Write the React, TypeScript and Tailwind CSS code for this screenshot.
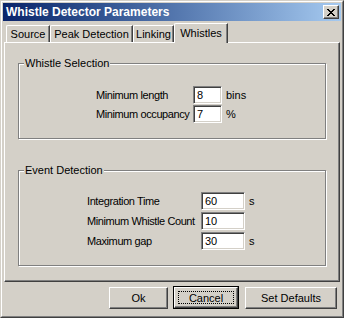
import React from "react";

const font = { fontFamily: '"Liberation Sans", Arial, sans-serif' };

function Field({ value, w }: { value: string; w: string }) {
  return (
    <div
      className={`${w} shrink-0 h-[18px] bg-white border border-t-[#808080] border-l-[#808080] border-b-white border-r-white shadow-[inset_1px_1px_0_#404040,inset_-1px_-1px_0_#d4d0c8] pl-[3px] text-[11px] leading-[16px] text-black`}
    >
      {value}
    </div>
  );
}

function Group({ title, children, className }: { title: string; children: React.ReactNode; className: string }) {
  return (
    <div className={`relative border border-[#808080] shadow-[inset_1px_1px_0_#fff,1px_1px_0_#fff] ${className}`}>
      <span className="absolute -top-[8px] left-[5px] px-[1px] bg-[#d4d0c8] text-[11px] leading-[14px] text-black whitespace-nowrap">
        {title}
      </span>
      {children}
    </div>
  );
}

function Tab({ label, w, active }: { label: string; w: string; active?: boolean }) {
  if (active) {
    return (
      <div
        className={`relative z-10 ${w} h-[20px] -mb-[1px] bg-[#d4d0c8] border-t border-l border-t-white border-l-white rounded-tl-[2px] border-r border-r-[#404040] shadow-[inset_-1px_0_0_#808080] text-center text-[11px] leading-[16px] pt-[1px] whitespace-nowrap`}
      >
        {label}
      </div>
    );
  }
  return (
    <div
      className={`${w} h-[17px] bg-[#d4d0c8] border-t border-l border-t-white border-l-white rounded-tl-[2px] border-r border-r-[#404040] shadow-[inset_-1px_0_0_#808080] text-center text-[11px] leading-[16px] whitespace-nowrap`}
    >
      {label}
    </div>
  );
}

function Button({ label, w, isDefault }: { label: string; w: string; isDefault?: boolean }) {
  if (isDefault) {
    return (
      <div className={`${w} h-[23px] border border-black -mt-[1px]`}>
        <div className="h-full border border-t-white border-l-white border-r-[#404040] border-b-[#404040] shadow-[inset_-1px_-1px_0_#808080] p-[3px]">
          <div className="h-full border border-dotted border-black text-center text-[11px] leading-[13px]">{label}</div>
        </div>
      </div>
    );
  }
  return (
    <div
      className={`${w} h-[22px] border border-t-white border-l-white border-r-[#404040] border-b-[#404040] shadow-[inset_-1px_-1px_0_#808080] text-center text-[11px] leading-[20px]`}
    >
      {label}
    </div>
  );
}

function Row({ label, value, unit, lw, fw }: { label: string; value: string; unit?: string; lw: string; fw: string }) {
  return (
    <div className="flex items-center whitespace-nowrap">
      <span className={`${lw} shrink-0 tracking-[-0.4px]`}>{label}</span>
      <Field value={value} w={fw} />
      {unit && <span className="ml-[4px]">{unit}</span>}
    </div>
  );
}

export default function App() {
  return (
    <div style={font} className="w-[344px] h-[318px] bg-[#d4d0c8] text-black">
      <div className="h-full border border-t-[#d4d0c8] border-l-[#d4d0c8] border-r-[#404040] border-b-[#404040]">
        <div className="h-full border border-t-white border-l-white border-r-[#808080] border-b-[#808080] p-[1px] flex flex-col">
          {/* title bar */}
          <div className="h-[18px] flex items-center justify-between bg-gradient-to-r from-[#0a246a] to-[#a6caf0] pl-[3px] pr-[2px]">
            <span className="text-white font-bold text-[12px] leading-[18px]">Whistle Detector Parameters</span>
            <div className="w-[16px] h-[14px] bg-[#d4d0c8] border border-t-white border-l-white border-r-[#404040] border-b-[#404040] shadow-[inset_-1px_-1px_0_#808080] flex items-center justify-center">
              <svg width="8" height="7" viewBox="0 0 8 7" shapeRendering="crispEdges">
                <path d="M0 0h2v1h-2zM6 0h2v1h-2zM1 1h2v1h-2zM5 1h2v1h-2zM2 2h4v1h-4zM3 3h2v1h-2zM2 4h4v1h-4zM1 5h2v1h-2zM5 5h2v1h-2zM0 6h2v1h-2zM6 6h2v1h-2z" fill="#000" />
              </svg>
            </div>
          </div>

          {/* tabs */}
          <div className="h-[21px] flex items-end pl-[3px]">
            <Tab label="Source" w="w-[44px]" />
            <Tab label="Peak Detection" w="w-[83px]" />
            <Tab label="Linking" w="w-[41px]" />
            <Tab label="Whistles" w="w-[54px]" active />
          </div>

          {/* panel */}
          <div className="mx-[1px] h-[240px] border border-t-white border-l-white border-r-[#404040] border-b-[#404040] shadow-[inset_-1px_-1px_0_#808080] px-[13px] pt-[20px] flex flex-col">
            <Group title="Whistle Selection" className="h-[76px] pt-[22px] pl-[77px]">
              <div className="flex flex-col gap-[1px] text-[11px]">
                <Row label="Minimum length" value="8" unit="bins" lw="w-[97px]" fw="w-[29px]" />
                <Row label="Minimum occupancy" value="7" unit="%" lw="w-[97px]" fw="w-[29px]" />
              </div>
            </Group>

            <Group title="Event Detection" className="mt-[31px] h-[96px] pt-[21px] pl-[68px]">
              <div className="flex flex-col gap-[2px] text-[11px]">
                <Row label="Integration Time" value="60" unit="s" lw="w-[114px]" fw="w-[44px]" />
                <Row label="Minimum Whistle Count" value="10" lw="w-[114px]" fw="w-[44px]" />
                <Row label="Maximum gap" value="30" unit="s" lw="w-[114px]" fw="w-[44px]" />
              </div>
            </Group>
          </div>

          {/* buttons */}
          <div className="mt-[5px] flex justify-end pr-[4px]">
            <Button label="Ok" w="w-[59px]" />
            <div className="ml-[5px]">
              <Button label="Cancel" w="w-[66px]" isDefault />
            </div>
            <div className="ml-[6px]">
              <Button label="Set Defaults" w="w-[92px]" />
            </div>
          </div>
        </div>
      </div>
    </div>
  );
}
